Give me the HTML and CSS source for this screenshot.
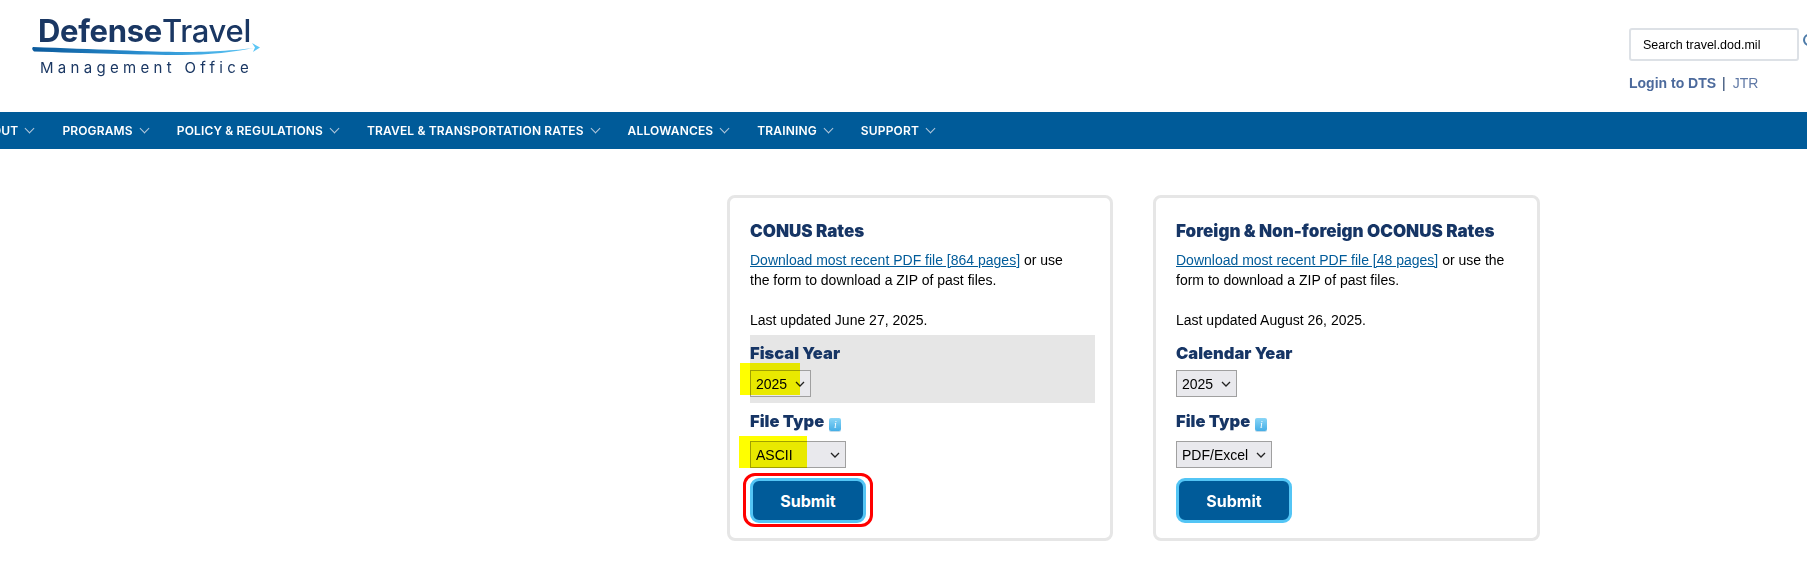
FILE: index.html
```html
<!DOCTYPE html>
<html lang="en">
<head>
  <meta charset="UTF-8" />
  <title>Per Diem Rates | Defense Travel Management Office</title>
  <link rel="stylesheet" href="styles.css">
</head>
<body>
  <header class="site-header">
    <a class="logo" href="#">
      <span class="logo-name"><b>Defense</b>Travel</span>
      <svg class="logo-swoosh" width="230" height="14" viewBox="0 0 230 14" aria-hidden="true">
        <defs>
          <linearGradient id="swoosh" x1="0" x2="1" y1="0" y2="0">
            <stop offset="0" stop-color="#0b5a9c"/>
            <stop offset="0.5" stop-color="#2a8fd0"/>
            <stop offset="1" stop-color="#5cc6f5"/>
          </linearGradient>
        </defs>
        <path d="M1 4C60 6 120 9 150 9C180 9 210 7 224 4.500C205 9 175 12 150 12C110 12 50 10 2 8.500Q-1 6 1 4Z" fill="url(#swoosh)"/>
        <path d="M220 0L228 4.500L221 9L223 4.500Z" fill="#5cc6f5"/>
      </svg>
      <span class="logo-sub">Management Office</span>
    </a>
    <div class="tools">
      <div class="search">
        <input class="search-box" type="text" placeholder="Search travel.dod.mil">
        <svg class="search-icon" width="16" height="16" viewBox="0 0 16 16" aria-hidden="true">
          <circle cx="7" cy="7" r="5" fill="none" stroke="#4c7aa8" stroke-width="2"/>
        </svg>
      </div>
      <div class="quick-links"><a class="login" href="#">Login to DTS</a><span class="sep">|</span><a href="#">JTR</a></div>
    </div>
  </header>

  <nav class="main-nav">
    <a href="#">ABOUT</a>
    <a href="#">PROGRAMS</a>
    <a href="#">POLICY &amp; REGULATIONS</a>
    <a href="#">TRAVEL &amp; TRANSPORTATION RATES</a>
    <a href="#">ALLOWANCES</a>
    <a href="#">TRAINING</a>
    <a href="#">SUPPORT</a>
  </nav>

  <main class="rates">
    <!-- CONUS -->
    <form class="card">
      <h3>CONUS Rates</h3>
      <p class="intro"><a href="#">Download most recent PDF file [864 pages]</a> or use the form to download a ZIP of past files.</p>
      <p class="updated">Last updated June 27, 2025.</p>
      <div class="field field-shaded">
        <label for="fy">Fiscal Year</label>
        <div class="marked">
          <select id="fy" class="year-select"><option>2025</option></select>
          <span class="highlight hl-year"></span>
        </div>
      </div>
      <div class="field field-type">
        <label for="ft">File Type <span class="info">i</span></label>
        <div class="marked">
          <select id="ft" class="type-select"><option>ASCII</option></select>
          <span class="highlight hl-type"></span>
        </div>
      </div>
      <div class="marked">
        <button class="btn" type="button">Submit</button>
        <span class="red-ring"></span>
      </div>
    </form>

    <!-- OCONUS -->
    <form class="card">
      <h3>Foreign &amp; Non-foreign OCONUS Rates</h3>
      <p class="intro"><a href="#">Download most recent PDF file [48 pages]</a> or use the form to download a ZIP of past files.</p>
      <p class="updated">Last updated August 26, 2025.</p>
      <div class="field">
        <label for="cy">Calendar Year</label>
        <select id="cy" class="year-select"><option>2025</option></select>
      </div>
      <div class="field field-type">
        <label for="ft2">File Type <span class="info">i</span></label>
        <select id="ft2" class="type-select"><option>PDF/Excel</option></select>
      </div>
      <button class="btn" type="button">Submit</button>
    </form>
  </main>
</body>
</html>
```

FILE: styles.css
```css
/* BASE */
* {
  margin: 0;
  padding: 0;
  box-sizing: border-box;
}
html, body {
  overflow: hidden;
}
body {
  font-family: "Liberation Sans", Arial, sans-serif;
  font-size: 14px;
  line-height: 20px;
  color: #000;
  background: #fff;
}

/* HEADER */
.site-header {
  display: flex;
  justify-content: space-between;
  height: 112px;
}
.logo {
  display: flex;
  flex-direction: column;
  margin: 15px 0 0 32px;
  color: #1a3763;
  text-decoration: none;
  width: 232px;
}
.logo-name {
  font-family: Inter, sans-serif;
  font-size: 31px;
  font-weight: 500;
  line-height: 32px;
  margin-left: 6px;
  letter-spacing: -0.3px;
  white-space: nowrap;
}
.logo-name b {
  font-weight: 700;
}
.logo-swoosh {
  display: block;
  margin-top: -4px;
}
.logo-sub {
  font-family: Inter, sans-serif;
  font-size: 15px;
  line-height: 18px;
  letter-spacing: 4.300px;
  margin: 2px 0 0 8px;
  white-space: nowrap;
}
.tools {
  width: 178px;
  padding-top: 28px;
}
.search {
  display: flex;
  gap: 3px;
}
.search-box {
  flex: none;
  width: 170px;
  height: 33px;
  padding: 0 12px;
  border: 2px solid #dde1e6;
  border-radius: 3px;
  font-family: "Liberation Sans", Arial, sans-serif;
  font-size: 12.500px;
}
.search-box::placeholder {
  color: #000;
  opacity: 1;
}
.search-icon {
  flex: none;
  margin-top: 5px;
}
.quick-links {
  margin-top: 12px;
  font-size: 14px;
  color: #4c6a9c;
}
.quick-links a {
  color: #6079a6;
  text-decoration: none;
}
.quick-links .login {
  font-weight: bold;
  color: #4c6a9c;
}
.sep {
  margin: 0 7px 0 6px;
  color: #1a3763;
}

/* NAV */
.main-nav {
  display: flex;
  gap: 28px;
  height: 37px;
  margin-left: -25px;
  align-items: center;
  background: #005b99;
  white-space: nowrap;
}
.main-nav a {
  display: flex;
  align-items: center;
  gap: 7px;
  font-family: Inter, sans-serif;
  font-size: 12px;
  font-weight: 600;
  letter-spacing: 0.15px;
  color: #fff;
  text-decoration: none;
}
.main-nav a::after {
  content: "";
  width: 6px;
  height: 6px;
  margin: -4px 1px 0;
  border-right: 1.500px solid #b5c9dc;
  border-bottom: 1.500px solid #b5c9dc;
  transform: rotate(45deg);
}

/* CARDS */
.rates {
  display: flex;
  gap: 40px;
  padding: 46px 0 0 727px;
}
.card {
  width: 386px;
  height: 346px;
  padding: 23px 20px 0;
  border: 3px solid #e6e6e6;
  border-radius: 8px;
}
.card + .card {
  width: 387px;
}
.card h3 {
  font-family: Inter, sans-serif;
  font-size: 17px;
  font-weight: 900;
  line-height: 20px;
  color: #163565;
  white-space: nowrap;
}
.intro {
  max-width: 330px;
  margin-top: 9px;
}
.intro a {
  color: #005b99;
}
.updated {
  margin-top: 20px;
}
.field {
  height: 68px;
  margin-top: 5px;
  padding-top: 5px;
}
.field-shaded {
  margin-right: -5px;
  background: #e6e6e6;
}
.field label {
  display: block;
  margin-bottom: 4px;
  font-family: Inter, sans-serif;
  font-size: 16.500px;
  font-weight: 900;
  line-height: 26px;
  color: #163565;
}
.field-type {
  height: 65px;
  margin-top: 0;
}
.field-type label {
  margin-bottom: 7px;
}
.field select {
  display: block;
  height: 27px;
  padding-left: 5px;
  border: 1px solid #a0a0a0;
  border-radius: 0;
  appearance: none;
  background: #e9e9ed url("data:image/svg+xml,%3Csvg xmlns='http://www.w3.org/2000/svg' width='10' height='6'%3E%3Cpath d='M1 1l4 4 4-4' fill='none' stroke='%23222' stroke-width='1.300'/%3E%3C/svg%3E") no-repeat right 5px center;
  font-family: "Liberation Sans", Arial, sans-serif;
  font-size: 14px;
  color: #000;
}
.year-select {
  width: 61px;
}
.type-select {
  width: 96px;
}
.info {
  display: inline-block;
  width: 12px;
  height: 13px;
  margin-left: 2px;
  vertical-align: -1px;
  border-radius: 2px;
  background: linear-gradient(#8ad6f7, #45aee6);
  box-shadow: 0 1px 0 #c5dcea;
  font-family: "Liberation Serif", serif;
  font-size: 10px;
  font-style: italic;
  font-weight: normal;
  line-height: 13px;
  text-align: center;
  color: #fff;
}
.btn {
  display: block;
  width: 116px;
  height: 45px;
  margin-top: 10px;
  border: 3px solid #53c5f5;
  border-radius: 9px;
  background: #005b99;
  font-family: Inter, sans-serif;
  font-size: 16px;
  font-weight: 700;
  color: #fff;
}

/* annotations drawn over the screenshot */
.marked {
  position: relative;
}
.highlight {
  position: absolute;
  background: #ffff00;
  mix-blend-mode: multiply;
}
.hl-year {
  left: -10px;
  top: -7px;
  width: 60px;
  height: 32px;
}
.hl-type {
  left: -11px;
  top: -5px;
  width: 68px;
  height: 32px;
}
.red-ring {
  position: absolute;
  left: -7px;
  top: -5px;
  width: 130px;
  height: 54px;
  border: 3px solid #f00;
  border-radius: 12px;
}
```
